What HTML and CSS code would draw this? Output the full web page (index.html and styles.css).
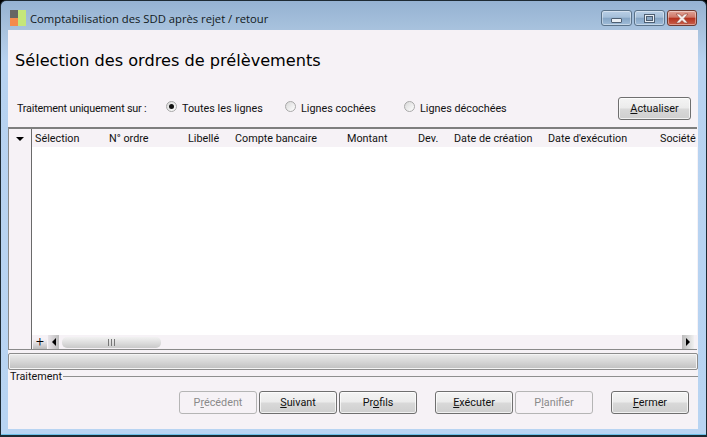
FILE: index.html
```html
<!DOCTYPE html>
<html lang="fr">
<head>
<meta charset="utf-8">
<title>Comptabilisation des SDD après rejet / retour</title>
<link rel="stylesheet" href="styles.css">
</head>
<body>
<div class="window">
  <div class="titlebar">
    <svg class="appicon" width="16" height="16" viewBox="0 0 16 16"><rect width="8" height="8" fill="#666663"/><rect y="8" width="8" height="8" fill="#f58b4c"/><rect x="8" width="8" height="16" fill="#c5e67a"/></svg>
    <span class="title">Comptabilisation des SDD après rejet / retour</span>
    <div class="winbtns">
      <div class="winbtn"><span class="glyph-min"></span></div>
      <div class="winbtn"><span class="glyph-max"></span></div>
      <div class="winbtn close"><svg width="16" height="11" viewBox="0 0 16 11"><path d="M2 1h3.500l2.500 2.500 2.500-2.500h3.500l-4 4.500 4 4.500h-3.500l-2.500-2.500-2.500 2.500h-3.500l4-4.500z" fill="#f4ecea" stroke="#8a3a2c" stroke-width=".6"/></svg></div>
    </div>
  </div>
  <div class="content">
    <h1 class="heading">Sélection des ordres de prélèvements</h1>
    <div class="filters">
      <span class="filter-label">Traitement uniquement sur :</span>
      <label class="radio r1"><span class="dot on"></span>Toutes les lignes</label>
      <label class="radio r2"><span class="dot"></span>Lignes cochées</label>
      <label class="radio r3"><span class="dot"></span>Lignes décochées</label>
      <button class="btn refresh"><u>A</u>ctualiser</button>
    </div>
    <div class="grid">
      <div class="gutter">
        <div class="corner"><span class="tri-down"></span></div>
      </div>
      <div class="table">
        <div class="thead">
          <span>Sélection</span>
          <span>N° ordre</span>
          <span>Libellé</span>
          <span>Compte bancaire</span>
          <span>Montant</span>
          <span>Dev.</span>
          <span>Date de création</span>
          <span>Date d'exécution</span>
          <span>Société</span>
        </div>
        <div class="tbody"></div>
        <div class="hscroll">
          <span class="plus">+</span>
          <span class="arrow-cell"><span class="tri-left"></span></span>
          <div class="thumb"><span class="grip"></span></div>
          <span class="arrow-cell right"><span class="tri-right"></span></span>
        </div>
      </div>
    </div>
    <div class="progress"></div>
    <div class="group-title"><span>Traitement</span></div>
    <div class="actions">
      <button class="btn" disabled>P<u>r</u>écédent</button>
      <button class="btn"><u>S</u>uivant</button>
      <button class="btn">Pr<u>o</u>fils</button>
      <button class="btn gap"><u>E</u>xécuter</button>
      <button class="btn" disabled>P<u>l</u>anifier</button>
      <button class="btn gap"><u>F</u>ermer</button>
    </div>
  </div>
</div>
</body>
</html>
```
FILE: styles.css
```css
* { box-sizing: border-box; }
html, body { margin: 0; padding: 0; background: #000; }
body { font-family: Roboto, "Open Sans", sans-serif; font-size: 10.8px; color: #111; }
.window {
  width: 707px; height: 437px;
  display: flex; flex-direction: column;
  padding: 0 8px 6px 7px;
  border: 1px solid #1d2a33;
  border-bottom-width: 2px;
  border-radius: 6px 6px 0 0;
  background: linear-gradient(to bottom, #95b2d2 0, #a9c3de 30px, #b7d2f0 60px, #b8d4f2 100%);
  box-shadow: inset 0 -1px 0 #6cc0e8;
}
.titlebar { height: 29px; flex: none; display: flex; align-items: center; padding-top: 5px; }
.appicon { flex: none; margin-left: 2px; }
.title { margin-left: 4px; font-family: "Open Sans", sans-serif; font-size: 11.25px; color: #101820; }
.winbtns { margin-left: auto; display: flex; gap: 2px; margin-right: 1px; }
.winbtn {
  width: 31px; height: 16px;
  border: 1px solid #5a7289; border-radius: 3px;
  background: linear-gradient(to bottom, #b9cfe6 0, #a5bfd9 45%, #86a5c5 50%, #9fbcd8 100%);
  box-shadow: inset 0 0 0 1px rgba(255,255,255,.4);
  display: flex; align-items: center; justify-content: center;
}
.winbtn.close {
  width: 30px;
  background: linear-gradient(to bottom, #e0a498 0, #cf7666 45%, #b5301c 50%, #c8604c 100%);
  border-color: #6e3a30;
}
.glyph-min { width: 11px; height: 5px; margin-top: 5px; background: #e8eef4; border: 1px solid #4e5f72; border-radius: 1px; }
.glyph-max { width: 11px; height: 9px; background: #e8eef4; border: 1px solid #4e5f72; position: relative; }
.glyph-max::after { content: ""; position: absolute; inset: 1px; background: #8aa6c2; border: 1px solid #4e5f72; }
.content { flex: 1; min-height: 0; background: #f6f2f6; display: flex; flex-direction: column; }
.heading { margin: 19px 0 0 7px; height: 24px; flex: none; font-family: "DejaVu Sans", sans-serif; font-size: 16.15px; line-height: 24px; font-weight: normal; color: #000; white-space: nowrap; }
.filters { margin-top: 24px; height: 23px; flex: none; display: flex; align-items: center; padding-left: 9px; }
.filter-label { width: 149px; flex: none; letter-spacing: -0.2px; }
.radio { display: flex; align-items: center; flex: none; }
.r1 { width: 119px; }
.r2 { width: 119px; }
.r3 { width: 214px; }
.dot {
  width: 11px; height: 11px; margin-right: 5px; border-radius: 50%;
  border: 1px solid #a8a8a8; background: linear-gradient(135deg, #d8d8d8, #fff);
  display: flex; align-items: center; justify-content: center;
  transform: translateY(-2px);
}
.dot.on::after { content: ""; width: 5px; height: 5px; border-radius: 50%; background: #111; }
.btn {
  width: 78px; height: 23px; padding: 0; flex: none;
  font: inherit; color: #111;
  border: 1px solid #6f6f6f; border-radius: 3px;
  background: linear-gradient(to bottom, #f4f4f4 0, #ececec 45%, #d8d8d8 55%, #cfcfcf 100%);
  box-shadow: inset 0 0 0 1px rgba(255,255,255,.7);
}
.btn:disabled { color: #8a8a8a; background: #f6f2f6; border-color: #b5b5b5; box-shadow: none; }
.refresh { width: 73px; }
.grid {
  margin: 7px 1px 0 0; height: 223px; flex: none; display: flex;
  border-top: 2px solid #7e7e7e; border-bottom: 1px solid #8a8a8a; border-left: 1px solid #8a8a8a;
  background: #fff;
}
.gutter { width: 23px; flex: none; background: #f6f2f6; border-right: 1px solid #6a6a6a; }
.corner { height: 19px; display: flex; justify-content: center; align-items: center; }
.tri-down { border-left: 4px solid transparent; border-right: 4px solid transparent; border-top: 4px solid #000; }
.table { flex: 1; min-width: 0; display: flex; flex-direction: column; overflow: hidden; }
.thead { height: 18px; flex: none; background: #f6f2f6; line-height: 19px; display: grid; grid-template-columns: 74px 79px 47px 112px 71px 36px 94px 112px 40px; padding-left: 3px; white-space: nowrap; }
.tbody { flex: 1; }
.hscroll { height: 14px; flex: none; background: #f6f2f6; display: flex; align-items: center; }
.plus {
  margin-left: 1px; width: 14px; height: 14px; flex: none;
  text-align: center; font-size: 14px; font-weight: 300; line-height: 13px; color: #000;
  background: linear-gradient(to bottom, #f6f2f6 30%, #bcbcbc);
}
.arrow-cell { width: 11px; height: 14px; margin-left: 1px; flex: none; display: flex; align-items: center; justify-content: center; background: linear-gradient(to right, #e8e4e8, #bcbcbc); }
.arrow-cell.right { margin-left: auto; margin-right: 3px; width: 12px; background: linear-gradient(to right, #bcbcbc, #f0f0f0); }
.tri-left { border-top: 4px solid transparent; border-bottom: 4px solid transparent; border-right: 4px solid #000; }
.tri-right { border-top: 4px solid transparent; border-bottom: 4px solid transparent; border-left: 4px solid #000; }
.thumb { width: 99px; height: 11px; margin-left: 3px; flex: none; border-radius: 5px; background: linear-gradient(to bottom, #f2f2f2, #c9c9c9); display: flex; align-items: center; justify-content: center; }
.grip { width: 7px; height: 7px; background: repeating-linear-gradient(to right, #777 0 1px, transparent 1px 3px); }
.progress {
  margin-top: 3px; height: 17px; flex: none; border: 1px solid #8c8c8c; border-radius: 2px;
  background: linear-gradient(to bottom, #ececec, #d6d6d6 50%, #c0c0c0);
  box-shadow: inset 0 0 0 1px #f4f4f4;
}
.group-title { height: 13px; flex: none; display: flex; align-items: center; padding-left: 2px; }
.group-title::after { content: ""; flex: 1; height: 1px; background: #8f8f8f; margin-left: 1px; margin-top: -1px; }
.actions { flex: 1; display: flex; padding: 8px 0 0 171px; gap: 2px; align-items: flex-start; }
.gap { margin-left: 16px; }
```
